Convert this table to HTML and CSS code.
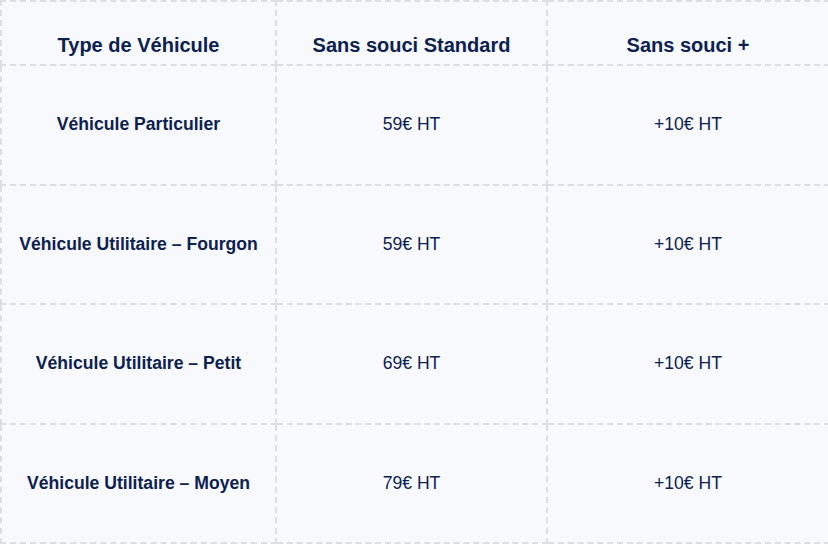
FILE: index.html
```html
<!DOCTYPE html>
<html lang="fr">
<head>
<meta charset="utf-8">
<link rel="stylesheet" href="styles.css">
</head>
<body>
<table class="price-table">
  <colgroup>
    <col class="c1"><col class="c2"><col class="c3">
  </colgroup>
  <thead>
    <tr>
      <th>Type de Véhicule</th>
      <th>Sans souci Standard</th>
      <th>Sans souci +</th>
    </tr>
  </thead>
  <tbody>
    <tr><td class="type">Véhicule Particulier</td><td>59€ HT</td><td>+10€ HT</td></tr>
    <tr><td class="type">Véhicule Utilitaire – Fourgon</td><td>59€ HT</td><td>+10€ HT</td></tr>
    <tr><td class="type">Véhicule Utilitaire – Petit</td><td>69€ HT</td><td>+10€ HT</td></tr>
    <tr><td class="type">Véhicule Utilitaire – Moyen</td><td>79€ HT</td><td>+10€ HT</td></tr>
  </tbody>
</table>
</body>
</html>
```

FILE: styles.css
```css
html, body {
  margin: 0;
  padding: 0;
  background: #ffffff;
}
.price-table {
  width: 828px;
  border-collapse: collapse;
  table-layout: fixed;
  font-family: "Liberation Sans", Arial, sans-serif;
  color: #0d2150;
  background: #f7f9fd;
}
.c1 { width: 275px; }
.c2 { width: 271px; }
.c3 { width: 282px; }
.price-table th,
.price-table td {
  border: 2px dashed #dcdee4;
  text-align: center;
  vertical-align: middle;
}
.price-table th {
  height: 63px;
  padding: 32px 4px 7px;
  box-sizing: border-box;
  font-size: 20px;
  font-weight: bold;
  line-height: 23px;
}
.price-table td {
  height: 119.5px;
  padding: 0 4px;
  box-sizing: border-box;
  font-size: 17.6px;
}
.price-table td.type {
  font-weight: bold;
}
```
